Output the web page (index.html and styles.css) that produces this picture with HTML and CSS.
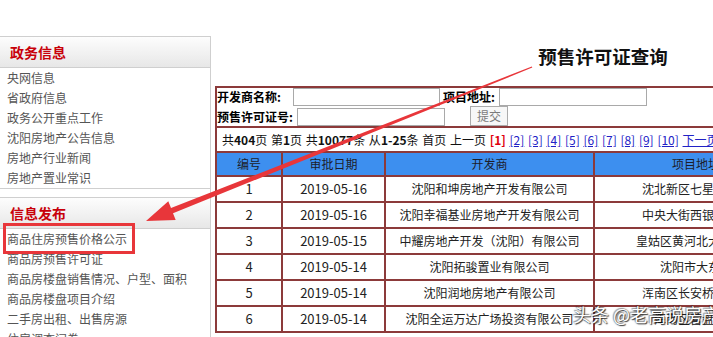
FILE: index.html
```html
<!DOCTYPE html>
<html lang="zh-CN">
<head>
<meta charset="utf-8">
<title>预售许可证查询</title>
<link rel="stylesheet" href="styles.css">
</head>
<body>
<div class="page">
  <aside class="sidebar">
    <section class="side-panel">
      <h3 class="side-head">政务信息</h3>
      <ul class="side-list">
        <li>央网信息</li>
        <li>省政府信息</li>
        <li>政务公开重点工作</li>
        <li>沈阳房地产公告信息</li>
        <li>房地产行业新闻</li>
        <li>房地产置业常识</li>
      </ul>
    </section>
    <section class="side-panel side-panel-next">
      <h3 class="side-head">信息发布</h3>
      <ul class="side-list">
        <li>商品住房预售价格公示</li>
        <li>商品房预售许可证</li>
        <li>商品房楼盘销售情况、户型、面积</li>
        <li>商品房楼盘项目介绍</li>
        <li>二手房出租、出售房源</li>
        <li>住房调查问卷</li>
      </ul>
    </section>
  </aside>

  <main class="main">
    <h1 class="title">预售许可证查询</h1>
    <div class="box">
      <form class="search">
        <div class="search-row">
          <label class="lbl">开发商名称:</label>
          <input class="inp inp-dev" type="text">
          <label class="lbl lbl-addr">项目地址:</label>
          <input class="inp inp-addr" type="text">
        </div>
        <div class="search-row search-row-2">
          <label class="lbl">预售许可证号:</label>
          <input class="inp inp-no" type="text">
          <button class="btn" type="button">提交</button>
        </div>
      </form>
      <div class="pager">共<b>404</b>页 第<b>1</b>页 共<b>10077</b>条 从<b>1-25</b>条 首页 上一页 <span class="cur">[1]</span> <a href="#">[2]</a> <a href="#">[3]</a> <a href="#">[4]</a> <a href="#">[5]</a> <a href="#">[6]</a> <a href="#">[7]</a> <a href="#">[8]</a> <a href="#">[9]</a> <a href="#">[10]</a> <a href="#">下一页</a> <a href="#">尾页</a></div>
      <table class="grid">
        <thead>
          <tr>
            <th class="c1">编号</th>
            <th class="c2">审批日期</th>
            <th class="c3">开发商</th>
            <th class="c4">项目地址</th>
            <th class="c5">预售许可证号</th>
          </tr>
        </thead>
        <tbody>
          <tr><td class="num">1</td><td class="num">2019-05-16</td><td>沈阳和坤房地产开发有限公司</td><td>沈北新区七星山大街</td><td>沈房预售字第2019046号</td></tr>
          <tr><td class="num">2</td><td class="num">2019-05-16</td><td>沈阳幸福基业房地产开发有限公司</td><td>中央大街西银河街南</td><td>沈房预售字第2019045号</td></tr>
          <tr><td class="num">3</td><td class="num">2019-05-15</td><td>中耀房地产开发（沈阳）有限公司</td><td>皇姑区黄河北大街西侧</td><td>沈房预售字第2019044号</td></tr>
          <tr><td class="num">4</td><td class="num">2019-05-14</td><td>沈阳拓骏置业有限公司</td><td>沈阳市大东区</td><td>沈房预售字第2019043号</td></tr>
          <tr><td class="num">5</td><td class="num">2019-05-14</td><td>沈阳润地房地产有限公司</td><td>浑南区长安桥南街东</td><td>沈房预售字第2019042号</td></tr>
          <tr><td class="num">6</td><td class="num">2019-05-14</td><td>沈阳全运万达广场投资有限公司</td><td>浑南区营盘西街</td><td>沈房预售字第2019041号</td></tr>
        </tbody>
      </table>
    </div>
  </main>

  <svg class="annot" width="713" height="337" viewBox="0 0 713 337" aria-hidden="true">
    <rect x="4.5" y="224.5" width="129" height="28" fill="none" stroke="#e8363a" stroke-width="3"/>
    <polygon fill="#e8363a" points="531.8,66.4 532.3,67.6 173.0,213.2 175.7,219.9 146,221 168.3,201.3 171.0,208.0"/>
  </svg>

  <div class="watermark">头条 @老高说房产</div>
</div>
</body>
</html>
```

FILE: styles.css
```css
html, body {
  margin: 0;
  padding: 0;
  background: #fff;
  overflow: hidden;
}

body {
  font-family: "Noto Sans CJK SC", "Microsoft YaHei", sans-serif;
  font-size: 12px;
  color: #222;
}

.page {
  position: relative;
  width: 713px;
  height: 337px;
  overflow: hidden;
  display: flex;
  align-items: flex-start;
}

/* ---------- sidebar ---------- */
.sidebar {
  flex: 0 0 211px;
  width: 211px;
  box-sizing: border-box;
  margin-top: 36px;
  border-right: 1px solid #cfcfcf;
  min-height: 320px;
}

.side-panel {
  border-top: 1px solid #cfcfcf;
  border-bottom: 1px solid #cfcfcf;
}

.side-panel-next {
  margin-top: 8px;
}

.side-head {
  margin: 0;
  height: 30px;
  line-height: 30px;
  padding-left: 10px;
  font-size: 14px;
  font-weight: bold;
  color: #c8000a;
  background: linear-gradient(#fdfdfd, #e7e7e7);
  border-bottom: 1px solid #cfcfcf;
}

.side-list {
  list-style: none;
  margin: 0;
  padding: 0 0 0 7px;
}

.side-list li {
  height: 20px;
  line-height: 20px;
  font-size: 12px;
  color: #555;
  white-space: nowrap;
}

/* ---------- main ---------- */
.main {
  flex: 0 0 776px;
  width: 776px;
  margin-left: 4px;
  padding-top: 44px;
}

.title {
  margin: 0 0 18px;
  height: 24px;
  line-height: 24px;
  text-align: center;
  font-size: 18.5px;
  font-weight: bold;
  color: #111;
}

.box {
  border-top: 2px solid #8c3a3a;
  border-left: 2px solid #8c3a3a;
}

.search {
  margin: 0;
  border-bottom: 2px solid #8c3a3a;
  height: 38px;
}

.search-row {
  display: flex;
  align-items: center;
  height: 18px;
}

.search-row-2 {
  height: 20px;
  align-items: flex-end;
}

.lbl {
  font-weight: bold;
  font-size: 12px;
  line-height: 18px;
  color: #000;
  white-space: nowrap;
}

.lbl-addr {
  margin-left: 3px;
}

.inp {
  box-sizing: border-box;
  height: 18px;
  border: 1px solid #a9a9a9;
  padding: 0;
  margin: 0;
  background: #fff;
}

.inp-dev { margin-left: 12px; width: 147px; }
.inp-addr { margin-left: 4px; width: 148px; }
.inp-no { margin-left: 4px; width: 148px; }

.btn {
  box-sizing: border-box;
  margin: 0 0 0 25px;
  width: 38px;
  height: 20px;
  padding: 0;
  border: 1px solid #ababab;
  background: #f7f7f7;
  color: #7b7b7b;
  font-family: inherit;
  font-size: 12px;
  line-height: 18px;
}

.pager {
  height: 23px;
  line-height: 23px;
  padding-left: 5px;
  border-bottom: 2px solid #8c3a3a;
  white-space: nowrap;
  color: #111;
  font-size: 12px;
  word-spacing: 1px;
}

.pager b {
  font-weight: bold;
}

.pager .cur {
  color: #e0000e;
  font-weight: bold;
}

.pager a {
  color: #2121c6;
  text-decoration: underline;
}

.grid {
  border-collapse: separate;
  border-spacing: 0;
  table-layout: fixed;
  width: 774px;
}

.grid th,
.grid td {
  box-sizing: border-box;
  padding: 0;
  border-right: 2px solid #8c3a3a;
  border-bottom: 2px solid #8c3a3a;
  text-align: center;
  white-space: nowrap;
  overflow: hidden;
  font-size: 12px;
  font-weight: normal;
}

.grid th {
  background: #3d8fef;
  color: #1d1d2a;
  height: 24px;
  line-height: 22px;
}

.grid td {
  height: 26px;
  line-height: 24px;
  color: #222;
}

.grid td.num {
  font-size: 13px;
}

.c1 { width: 66px; }
.c2 { width: 103px; }
.c3 { width: 209px; }
.c4 { width: 204px; }
.c5 { width: 192px; }

/* ---------- overlays ---------- */
.annot {
  position: absolute;
  left: 0;
  top: 0;
  pointer-events: none;
}

.watermark {
  position: absolute;
  left: 573px;
  top: 302px;
  font-size: 18px;
  line-height: 24px;
  color: #fff;
  white-space: nowrap;
  text-shadow: 1px 1px 1px rgba(0, 0, 0, 0.75), -1px -1px 1px rgba(0, 0, 0, 0.35), 0 0 2px rgba(0, 0, 0, 0.5);
}
```
